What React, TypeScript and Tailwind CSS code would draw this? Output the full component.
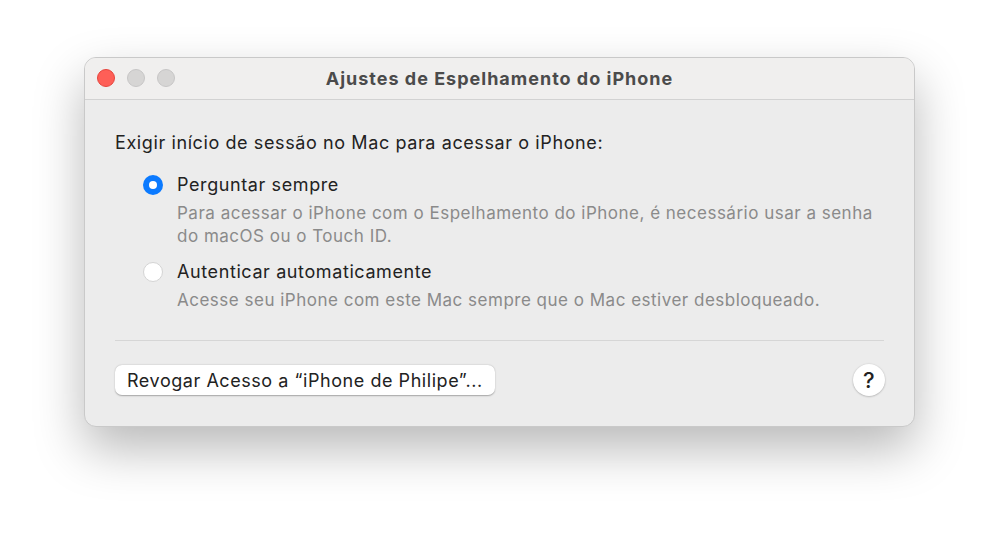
export default function App() {
  return (
    <div className="h-[539px] w-[1000px] bg-white pl-[84px] pt-[57px] font-['Inter','Noto_Sans',sans-serif]">
      <div className="flex h-[370px] w-[831px] flex-col overflow-hidden rounded-[12px] border border-[#c9c9c9] bg-[#ececec] shadow-[0_22px_50px_rgba(0,0,0,0.28)]">
        <div className="relative flex h-[42px] shrink-0 items-center justify-center border-b border-[#d2d2d2] bg-[#f0efee]">
          <div className="absolute left-[12px] top-[11px] flex gap-[12px]">
            <span className="h-[18px] w-[18px] rounded-full border border-[#e5443c] bg-[#fe5f57]" />
            <span className="h-[18px] w-[18px] rounded-full border border-[#c6c5c5] bg-[#d6d5d4]" />
            <span className="h-[18px] w-[18px] rounded-full border border-[#c6c5c5] bg-[#d6d5d4]" />
          </div>
          <span className="text-[18px] font-bold tracking-[1px] text-[#4b4b4b]">Ajustes de Espelhamento do iPhone</span>
        </div>

        <div className="flex flex-1 flex-col px-[30px] pt-[31px] tracking-[0.6px]">
          <p className="text-[18px] leading-[24px] text-[#222]">Exigir início de sessão no Mac para acessar o iPhone:</p>

          <div className="mt-[18px] flex flex-col pl-[28px]">
            <div className="flex items-center gap-[14px]">
              <span className="flex h-[20px] w-[20px] items-center justify-center rounded-full bg-[#0b7aff]">
                <span className="h-[8px] w-[8px] rounded-full bg-white" />
              </span>
              <span className="text-[18px] leading-[24px] text-[#222]">Perguntar sempre</span>
            </div>
            <p className="mt-[5px] pl-[34px] text-[17px] leading-[23px] tracking-[0.5px] text-[#8a8a8a]">
              Para acessar o iPhone com o Espelhamento do iPhone, é necessário usar a senha
              <br />
              do macOS ou o Touch ID.
            </p>

            <div className="mt-[12px] flex items-center gap-[14px]">
              <span className="h-[20px] w-[20px] rounded-full border border-[#d4d4d4] bg-white" />
              <span className="text-[18px] leading-[24px] text-[#222]">Autenticar automaticamente</span>
            </div>
            <p className="mt-[5px] pl-[34px] text-[17px] leading-[23px] tracking-[0.5px] text-[#8a8a8a]">
              Acesse seu iPhone com este Mac sempre que o Mac estiver desbloqueado.
            </p>
          </div>

          <div className="mt-[28px] h-px bg-[#d6d6d6]" />

          <div className="mt-[23px] flex items-center justify-between">
            <button className="h-[30px] rounded-[7px] bg-white px-[12px] text-[18px] tracking-[0.55px] text-[#222] shadow-[0_0.5px_1.5px_rgba(0,0,0,0.3)]">
              Revogar Acesso a “iPhone de Philipe”...
            </button>
            <button className="mr-[-1px] flex h-[32px] w-[32px] items-center justify-center rounded-full bg-white text-[22px] font-medium text-[#222] shadow-[0_0.5px_2px_rgba(0,0,0,0.3)]">
              ?
            </button>
          </div>
        </div>
      </div>
    </div>
  );
}
